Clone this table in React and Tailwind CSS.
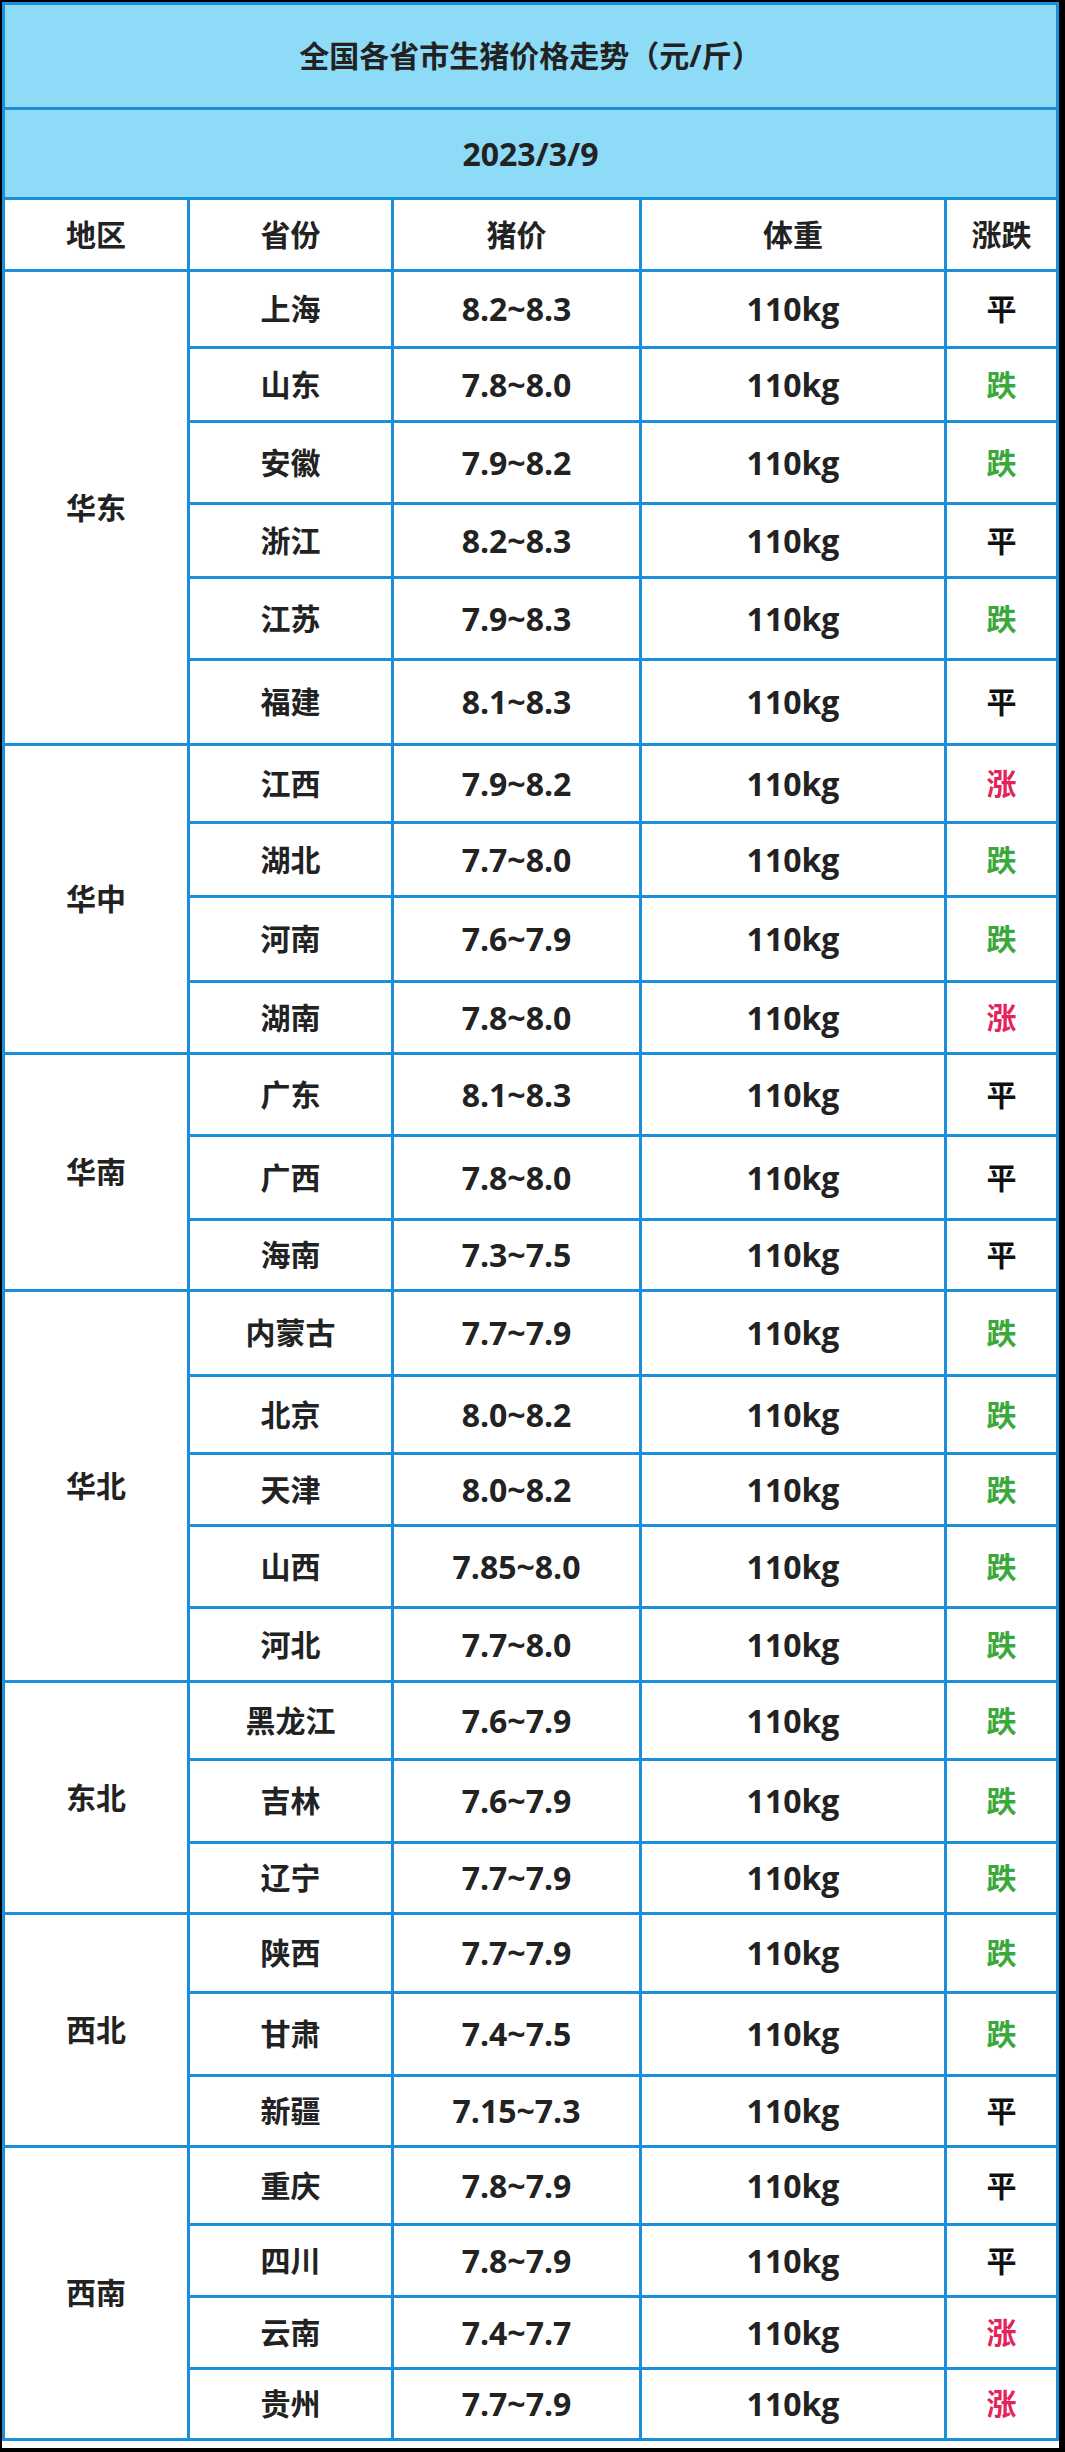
import React from "react";

const groups = [
  {
    region: "华东",
    span: "row-span-6",
    rows: [
      ["上海", "8.2~8.3", "平", "h-[74px]"],
      ["山东", "7.8~8.0", "跌", "h-[71px]"],
      ["安徽", "7.9~8.2", "跌", "h-[79px]"],
      ["浙江", "8.2~8.3", "平", "h-[71px]"],
      ["江苏", "7.9~8.3", "跌", "h-[79px]"],
      ["福建", "8.1~8.3", "平", "h-[82px]"],
    ],
  },
  {
    region: "华中",
    span: "row-span-4",
    rows: [
      ["江西", "7.9~8.2", "涨", "h-[75px]"],
      ["湖北", "7.7~8.0", "跌", "h-[71px]"],
      ["河南", "7.6~7.9", "跌", "h-[82px]"],
      ["湖南", "7.8~8.0", "涨", "h-[69px]"],
    ],
  },
  {
    region: "华南",
    span: "row-span-3",
    rows: [
      ["广东", "8.1~8.3", "平", "h-[79px]"],
      ["广西", "7.8~8.0", "平", "h-[81px]"],
      ["海南", "7.3~7.5", "平", "h-[68px]"],
    ],
  },
  {
    region: "华北",
    span: "row-span-5",
    rows: [
      ["内蒙古", "7.7~7.9", "跌", "h-[82px]"],
      ["北京", "8.0~8.2", "跌", "h-[75px]"],
      ["天津", "8.0~8.2", "跌", "h-[69px]"],
      ["山西", "7.85~8.0", "跌", "h-[79px]"],
      ["河北", "7.7~8.0", "跌", "h-[71px]"],
    ],
  },
  {
    region: "东北",
    span: "row-span-3",
    rows: [
      ["黑龙江", "7.6~7.9", "跌", "h-[75px]"],
      ["吉林", "7.6~7.9", "跌", "h-[80px]"],
      ["辽宁", "7.7~7.9", "跌", "h-[68px]"],
    ],
  },
  {
    region: "西北",
    span: "row-span-3",
    rows: [
      ["陕西", "7.7~7.9", "跌", "h-[76px]"],
      ["甘肃", "7.4~7.5", "跌", "h-[80px]"],
      ["新疆", "7.15~7.3", "平", "h-[68px]"],
    ],
  },
  {
    region: "西南",
    span: "row-span-4",
    rows: [
      ["重庆", "7.8~7.9", "平", "h-[75px]"],
      ["四川", "7.8~7.9", "平", "h-[69px]"],
      ["云南", "7.4~7.7", "涨", "h-[69px]"],
      ["贵州", "7.7~7.9", "涨", "h-[68px]"],
    ],
  },
];

const trendColor = {
  平: "text-[#111111]",
  跌: "text-[#3aa83a]",
  涨: "text-[#e2245a]",
};

const cell = "bg-white flex items-center justify-center leading-none";

const App = () => {
  return (
    <div
      className="w-[1065px] h-[2452px] bg-black pl-[2px] pt-[2px] pr-[6px] pb-[4px] font-bold text-[#222222] text-[30px]"
      style={{ fontFamily: '"Open Sans", "Noto Sans CJK SC", sans-serif' }}
    >
      <div className="h-full bg-white">
        <div className="grid grid-cols-[182px_201px_245px_302px_109px] gap-[3px] p-[3px] bg-[#1b8fdb]">
          <div className="col-span-5 h-[102px] bg-[#8ddbf6] flex items-center justify-center leading-none">
            全国各省市生猪价格走势（元/斤）
          </div>
          <div className="col-span-5 h-[87px] bg-[#8ddbf6] flex items-center justify-center leading-none text-[32px]">
            2023/3/9
          </div>

          {["地区", "省份", "猪价", "体重", "涨跌"].map((h) => (
            <div key={h} className={`${cell} h-[69px]`}>
              {h}
            </div>
          ))}

          {groups.map((g) => (
            <React.Fragment key={g.region}>
              <div className={`${cell} ${g.span}`}>{g.region}</div>
              {g.rows.map(([prov, price, trend, h]) => (
                <React.Fragment key={prov}>
                  <div className={`${cell} ${h}`}>{prov}</div>
                  <div className={`${cell} ${h} text-[32px]`}>{price}</div>
                  <div className={`${cell} ${h} text-[32px]`}>110kg</div>
                  <div className={`${cell} ${h} ${trendColor[trend]}`}>{trend}</div>
                </React.Fragment>
              ))}
            </React.Fragment>
          ))}
        </div>
      </div>
    </div>
  );
};

export default App;
